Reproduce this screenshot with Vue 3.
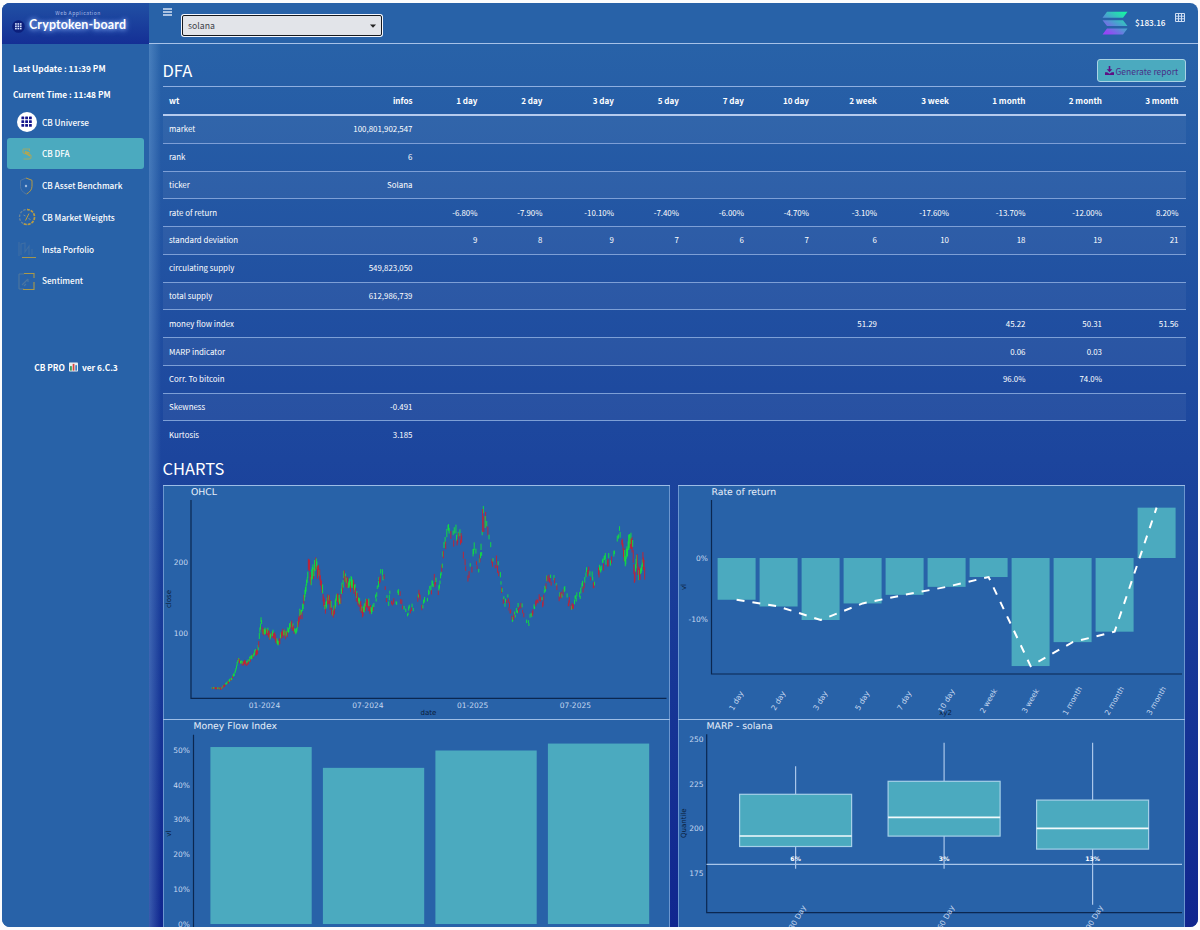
<script setup>
import { ref, computed } from "vue";

const token = ref("solana");
const activeItem = ref("dfa");

const menu = [
  { id: "universe", label: "CB Universe" },
  { id: "dfa", label: "CB DFA" },
  { id: "benchmark", label: "CB Asset Benchmark" },
  { id: "weights", label: "CB Market Weights" },
  { id: "portfolio", label: "Insta Porfolio" },
  { id: "sentiment", label: "Sentiment" },
];

const columns = [
  "wt", "infos", "1 day", "2 day", "3 day", "5 day", "7 day",
  "10 day", "2 week", "3 week", "1 month", "2 month", "3 month",
];
const periods = columns.slice(2);

const returns = [-6.8, -7.9, -10.1, -7.4, -6, -4.7, -3.1, -17.6, -13.7, -12, 8.2];
const deviations = [9, 8, 9, 7, 6, 7, 6, 10, 18, 19, 21];
const blank = (n) => Array(n).fill("");

const rows = [
  ["market", "100,801,902,547", ...blank(11)],
  ["rank", "6", ...blank(11)],
  ["ticker", "Solana", ...blank(11)],
  ["rate of return", "", ...returns.map((r) => r.toFixed(2) + "%")],
  ["standard deviation", "", ...deviations],
  ["circulating supply", "549,823,050", ...blank(11)],
  ["total supply", "612,986,739", ...blank(11)],
  ["money flow index", "", ...blank(6), "51.29", "", "45.22", "50.31", "51.56"],
  ["MARP indicator", "", ...blank(8), "0.06", "0.03", ""],
  ["Corr. To bitcoin", "", ...blank(8), "96.0%", "74.0%", ""],
  ["Skewness", "-0.491", ...blank(11)],
  ["Kurtosis", "3.185", ...blank(11)],
];

// OHCL: turning points of the price line, in chart coordinates
const path = [
  [212, 688], [221, 688.5], [226, 684], [232, 678], [235, 673], [238, 660], [242, 663],
  [247, 663], [252, 657], [255, 652], [258, 651], [261, 621], [263, 632], [267, 630],
  [270, 637], [273, 633], [278, 645], [282, 633], [286, 635], [291, 623], [296, 633],
  [300, 612], [302, 615], [304, 598], [307, 583], [308.5, 562], [311, 580], [313, 573],
  [316, 564], [321, 580], [325, 610], [328, 597], [333, 613], [337, 598], [340, 602],
  [344, 576], [348, 585], [353, 583], [357, 598], [363, 612], [367, 600], [371, 611],
  [376, 597], [380, 577], [384, 576], [388, 608], [390, 595], [395, 605], [399, 592],
  [403, 608], [407, 613], [410, 607], [413, 610], [419, 595], [422, 605], [428, 597],
  [434, 580], [439, 590], [443, 557], [448, 530], [450, 524], [453, 538], [458, 535],
  [463, 547], [467, 577], [472, 565], [475, 547], [478, 573], [481.6, 548], [483, 517],
  [486, 522], [489, 540], [492, 560], [497, 563], [501, 583], [504, 603], [507, 597],
  [512, 618], [516, 612], [520, 603], [524, 615], [527.6, 627], [532, 612], [537, 597],
  [543, 602], [547, 578], [553, 580], [559, 595], [565, 593], [571, 608], [577, 597],
  [582, 590], [587, 570], [594, 583], [600, 568], [607, 560], [614, 558], [618, 537],
  [620.6, 529], [625, 562], [630, 540], [632.6, 547], [634.5, 577], [637, 560],
  [639, 575], [643, 560], [645, 573],
];

const priceAt = (x) => {
  const i = Math.max(1, path.findIndex((p) => p[0] >= x));
  const [x0, y0] = path[i - 1];
  const [x1, y1] = path[i];
  return y0 + ((y1 - y0) * (x - x0)) / (x1 - x0);
};

const candles = computed(() => {
  let seed = 11;
  const rnd = () => {
    seed = (seed * 16807) % 2147483647;
    return seed / 2147483647;
  };
  const out = [];
  for (let x = 212; x < 645; x += 0.57) {
    const y = priceAt(x);
    const slope = priceAt(Math.min(x + 0.57, 645)) - y;
    const level = (700 - y) / 130;
    const sparse = x > 373 && x < 623;
    const r1 = rnd();
    const r2 = rnd();
    const r3 = rnd();
    if (sparse && r3 < 0.35) continue;
    const half = 0.5 + level * (sparse ? 3.2 : 6) * (0.35 + r1 * 0.65);
    const mid = y + (r2 - 0.5) * level * (sparse ? 12 : 8);
    const up = r1 + r2 < (slope < 0 ? 1.3 : 0.75);
    out.push({ x, y1: mid - half, y2: mid + half, up });
  }
  // the spike of the january 2025 top
  out.push({ x: 482.6, y1: 509, y2: 532, up: false });
  out.push({ x: 483.8, y1: 516, y2: 532, up: false });
  out.push({ x: 485.2, y1: 516, y2: 528, up: true });
  return out;
});

const priceTicks = [{ y: 562, label: "200" }, { y: 633.5, label: "100" }];
const dateTicks = [
  { x: 264.5, label: "01-2024" },
  { x: 367.8, label: "07-2024" },
  { x: 472.6, label: "01-2025" },
  { x: 575.3, label: "07-2025" },
];

// Rate of return
const rorBars = returns.map((r, i) => {
  const h = Math.abs(r) * 6.14;
  const cx = 737.1 + i * 42;
  return { cx, y: r < 0 ? 558 : 558 - h, h, end: 558 - r * 6.14, label: periods[i] };
});
const rorLine = rorBars.map((b) => `${b.cx},${b.end}`).join(" ");

// Money flow index
const mfiBars = [51, 45, 50, 52].map((v, i) => ({ x: 210.4 + i * 112.5, h: v * 3.47 }));
const mfiTicks = [0, 10, 20, 30, 40, 50].map((v) => ({ y: 924.3 - v * 3.475, label: v + "%" }));

// MARP
const boxes = [
  { cx: 796.1, top: 766.5, q3: 794.6, med: 836.3, q1: 846.8, low: 869, pct: "6%", label: "30 Day" },
  { cx: 944.6, top: 743, q3: 781.6, med: 817.7, q1: 836.4, low: 869, pct: "3%", label: "60 Day" },
  { cx: 1093.1, top: 743, q3: 800.4, med: 828.7, q1: 849.4, low: 905, pct: "13%", label: "90 Day" },
];
const marpTicks = [
  { y: 740, label: "250" },
  { y: 784.7, label: "225" },
  { y: 829, label: "200" },
  { y: 873.7, label: "175" },
];
</script>

<template>
  <div class="window">
    <aside class="sidebar">
      <div class="brand">
        <svg class="brand-icon" viewBox="0 0 14 14">
          <circle cx="7" cy="7" r="6.8" fill="#0c1f7c" />
          <g fill="#dbe6ff">
            <template v-for="r in 3" :key="r">
              <rect v-for="c in 3" :key="c" :x="0.7 + c * 2.6" :y="0.9 + r * 2.5" width="1.8" height="1.7" />
            </template>
          </g>
        </svg>
        <div class="brand-text">
          <span class="brand-sub">Web Application</span>
          <span class="brand-name">Cryptoken-board</span>
        </div>
      </div>

      <div class="times">
        <p>Last Update : 11:39 PM</p>
        <p>Current Time : 11:48 PM</p>
      </div>

      <nav class="menu">
        <a
          v-for="item in menu"
          :key="item.id"
          class="menu-item"
          :class="{ active: activeItem === item.id }"
          @click="activeItem = item.id"
        >
          <svg class="menu-icon" viewBox="0 0 20 20" fill="none">
            <template v-if="item.id === 'universe'">
              <circle cx="10" cy="10" r="10" fill="#fff" />
              <g fill="#15158c">
                <template v-for="r in 3" :key="r">
                  <rect v-for="c in 3" :key="c" :x="0.6 + c * 3.8" :y="0.6 + r * 3.8" width="2.8" height="2.8" rx="0.5" />
                </template>
              </g>
            </template>
            <template v-else-if="item.id === 'dfa'">
              <path d="M6 5h6.500v2M6 5.200v3l1.500 1.600h4.500L14 11.500V14l-1.500 1H6.500" stroke="#9ba76c" stroke-width="1.100" />
              <path d="M8 7.500l4.500 1.500M8 8.800l5 3.200" stroke="#c9a63c" stroke-width="1.200" />
            </template>
            <template v-else-if="item.id === 'benchmark'">
              <path d="M9 2L3.500 4.500v6c0 3 2 5.500 5.500 7.500" stroke="#5278a5" stroke-width="0.9" />
              <path d="M9 2l6 2.300v6c0 3.500-2.500 6-5.500 7.700" stroke="#b59a45" />
              <path d="M9 8.500l1.300 1.500L9 11.500 7.700 10z" fill="#b9cce6" />
            </template>
            <template v-else-if="item.id === 'weights'">
              <circle cx="10" cy="10" r="7.500" stroke="#6d8595" stroke-width="1.300" stroke-dasharray="2.600 1.300" />
              <path d="M10 2.500a7.500 7.500 0 1 1-4 13.800" stroke="#b89c40" stroke-width="1.600" stroke-dasharray="2.800 1.200" />
              <path d="M12 6.500l-3.500 7" stroke="#b89c40" />
              <path d="M6.500 8l2 1M11.500 11.500l2 1" stroke="#7c8e90" />
            </template>
            <template v-else-if="item.id === 'portfolio'">
              <path d="M2 3v14M4 16V5l4-1v9l4-6v9M15 16v-6" stroke="#3e6ea4" stroke-width="1.100" />
              <path d="M5 18.500h14" stroke="#a3954e" />
            </template>
            <template v-else>
              <path d="M2 3v15h5M2 3h5" stroke="#557a9b" stroke-width="0.900" />
              <path d="M7 2.500h10V7M17 11v7.500H6" stroke="#aa9848" stroke-width="1.100" />
              <path d="M5 14l6-6M7 15l2-2M11 8v3" stroke="#4975a2" stroke-width="1.200" />
            </template>
          </svg>
          <span>{{ item.label }}</span>
        </a>
      </nav>

      <div class="version">
        <span>CB PRO</span>
        <svg viewBox="0 0 10 10" class="version-icon">
          <rect width="10" height="10" rx="0.8" fill="#e9edf0" />
          <rect x="1.200" y="4" width="1.900" height="5" fill="#2e9b50" />
          <rect x="4.100" y="1.500" width="1.900" height="7.500" fill="#d8433c" />
          <rect x="7" y="3" width="1.900" height="6" fill="#3b82c4" />
        </svg>
        <span>ver 6.C.3</span>
      </div>
    </aside>

    <div class="body">
      <header class="topbar">
        <svg class="burger" viewBox="0 0 9 8">
          <path d="M0 1h9M0 4h9M0 7h9" stroke="#d5e2f4" stroke-width="1.300" />
        </svg>
        <div class="picker">
          <span>{{ token }}</span>
          <svg viewBox="0 0 6 4"><path d="M0 .5h6L3 3.700z" fill="#222" /></svg>
        </div>
        <div class="quote">
          <svg class="solana" viewBox="0 0 26 24">
            <defs>
              <linearGradient id="sol" x1="22" y1="0" x2="6" y2="24" gradientUnits="userSpaceOnUse">
                <stop offset="0.050" stop-color="#19f0a5" />
                <stop offset="0.500" stop-color="#4a9fd0" />
                <stop offset="0.950" stop-color="#9646f5" />
              </linearGradient>
            </defs>
            <path fill="url(#sol)" d="M5 .8h20.500L21 6.700H.5zM.5 9.200H21l4.500 5.900H5zM5 17.500h20.500L21 23.400H.5z" />
          </svg>
          <span class="price">$183.16</span>
          <svg class="grid-icon" viewBox="0 0 10 9">
            <path d="M.5.5h9v8h-9zM.5 3.200h9M.5 5.800h9M3.500.5v8M6.500.5v8" fill="none" stroke="#cfdef3" />
          </svg>
        </div>
      </header>

      <main class="main">
        <div class="title-row">
          <h1>DFA</h1>
          <button class="report">
            <svg viewBox="0 0 9 9">
              <path fill="#5f0f84" d="M3.700 0h1.600v3.200h2L4.500 6.200 1.700 3.200h2zM0 6.200h2.200l2.300 1.500 2.300-1.500H9V9H0z" />
            </svg>
            <span>Generate report</span>
          </button>
        </div>

        <table class="table">
          <thead>
            <tr>
              <th v-for="col in columns" :key="col">{{ col }}</th>
            </tr>
          </thead>
          <tbody>
            <tr v-for="row in rows" :key="row[0]">
              <td v-for="(cell, i) in row" :key="i">{{ cell }}</td>
            </tr>
          </tbody>
        </table>

        <h2>CHARTS</h2>

        <div class="charts">
          <svg class="chart" viewBox="163 486 507 233.5">
            <text class="chart-title" x="191" y="494.800">OHCL</text>
            <path class="axis" d="M191 500V698.300H666.500" />
            <text v-for="t in priceTicks" :key="t.label" class="tick end" x="188" :y="t.y + 2.700">{{ t.label }}</text>
            <text v-for="t in dateTicks" :key="t.label" class="tick mid" :x="t.x" y="708">{{ t.label }}</text>
            <line
              v-for="c in candles"
              :key="c.x"
              :class="c.up ? 'up' : 'down'"
              :x1="c.x"
              :x2="c.x"
              :y1="c.y1"
              :y2="c.y2"
            />
            <text class="axis-name" transform="translate(170.500 599) rotate(-90)">close</text>
            <text class="axis-name" x="428.500" y="714.500">date</text>
          </svg>

          <svg class="chart" viewBox="678.5 486 507 233.5">
            <text class="chart-title" x="712" y="494.800">Rate of return</text>
            <rect v-for="b in rorBars" :key="b.label" class="bar" :x="b.cx - 19" :y="b.y" width="38" :height="b.h" />
            <polyline class="trend" :points="rorLine" />
            <path class="axis" d="M712 500V674H1182.500" />
            <text class="tick end" x="708.500" y="560.800">0%</text>
            <text class="tick end" x="708.500" y="622.300">-10%</text>
            <text class="axis-name" x="946" y="715">xy2</text>
            <text
              v-for="b in rorBars"
              :key="b.label"
              class="tick mid"
              :transform="`translate(${b.cx + 2} 702) rotate(-60)`"
            >{{ b.label }}</text>
            <text class="axis-name" transform="translate(686 587) rotate(-90)">vl</text>
          </svg>

          <svg class="chart" viewBox="163 720.3 507 233.5">
            <text class="chart-title" x="193.500" y="729.300">Money Flow Index</text>
            <rect v-for="b in mfiBars" :key="b.x" class="bar" :x="b.x" :y="924.3 - b.h" width="101.300" :height="b.h" />
            <path class="axis" d="M193.500 735V933H666.500" />
            <text v-for="t in mfiTicks" :key="t.label" class="tick end" x="190" :y="t.y + 2.700">{{ t.label }}</text>
            <text class="axis-name" transform="translate(170.500 834) rotate(-90)">vl</text>
          </svg>

          <svg class="chart" viewBox="678.5 720.3 507 233.5">
            <text class="chart-title" x="707" y="729.300">MARP - solana</text>
            <path class="axis" d="M707.200 734.500V913H1182.500" />
            <g v-for="b in boxes" :key="b.label">
              <path class="whisker" :d="`M${b.cx} ${b.top}V${b.q3}M${b.cx} ${b.q1}V${b.low}`" />
              <rect class="box" :x="b.cx - 56" :y="b.q3" width="112" :height="b.q1 - b.q3" />
              <path class="median" :d="`M${b.cx - 56} ${b.med}h112`" />
              <text class="pct" :x="b.cx" y="861">{{ b.pct }}</text>
              <text class="tick mid" :transform="`translate(${b.cx + 4} 919) rotate(-60)`">{{ b.label }}</text>
            </g>
            <path class="whisker" d="M707 864.700H1182.500" />
            <text v-for="t in marpTicks" :key="t.label" class="tick end" x="704" :y="t.y + 2.700">{{ t.label }}</text>
            <text class="axis-name" transform="translate(686.500 823.500) rotate(-90)">Quantile</text>
          </svg>
        </div>
      </main>
    </div>
  </div>
</template>

<style>
body {
  background: #fcfcfd;
}
</style>

<style scoped>
* {
  margin: 0;
  padding: 0;
  box-sizing: border-box;
}

.window {
  display: flex;
  width: 1196px;
  height: 924px;
  margin: 3px 2px;
  border-radius: 8px;
  overflow: hidden;
  background: #2862a8;
  color: #fff;
  font-family: "Noto Sans CJK SC", "Noto Sans", sans-serif;
  font-size: 8.2px;
  font-weight: 500;
}

/* sidebar */
.sidebar {
  width: 147px;
  flex-shrink: 0;
  background: #2862a8;
}

.brand {
  display: flex;
  align-items: flex-end;
  height: 41px;
  padding: 0 0 11px 10px;
  background: linear-gradient(#2150a4, #142f95);
  gap: 4px;
}

.brand-icon {
  width: 13px;
  height: 13px;
}

.brand-text {
  display: flex;
  flex-direction: column;
  width: 98px;
}

.brand-sub {
  font-size: 5px;
  font-weight: 400;
  line-height: 8px;
  letter-spacing: 0.500px;
  text-align: center;
  color: #a9bce8;
}

.brand-name {
  font-family: "Lato", sans-serif;
  font-size: 12.400px;
  font-weight: 700;
  letter-spacing: 0.180px;
  line-height: 16px;
  white-space: nowrap;
  text-shadow: 0 0 4px #8fb2f5, 0 1px 6px #6f9cf0;
}

.times {
  padding: 10.500px 11px 0;
  font-size: 8.350px;
}

.times p {
  height: 26px;
  line-height: 26px;
  font-weight: 700;
}

.menu {
  padding: 0 5px;
}

.menu-item {
  display: flex;
  align-items: center;
  height: 31px;
  margin-bottom: 0.800px;
  padding-left: 10px;
  gap: 5px;
  border-radius: 3px;
}

.menu-item.active {
  background: #4baabf;
}

.menu-item span {
  position: relative;
  top: -0.500px;
}

.menu-icon {
  width: 20px;
  height: 20px;
}

.version {
  display: flex;
  align-items: center;
  justify-content: center;
  gap: 4px;
  margin-top: 65px;
  padding-left: 1px;
  font-size: 8.350px;
  font-weight: 700;
}

.version-icon {
  width: 9px;
  height: 10px;
}

/* topbar */
.body {
  display: flex;
  flex-direction: column;
  flex: 1;
  min-width: 0;
}

.topbar {
  display: flex;
  align-items: flex-start;
  flex-shrink: 0;
  height: 41px;
  padding: 0 13.500px 0 14px;
  border-bottom: 1px solid #a7c2e8;
}

.burger {
  width: 9px;
  height: 8px;
  margin-top: 5px;
}

.picker {
  display: flex;
  align-items: center;
  justify-content: space-between;
  width: 200px;
  height: 21px;
  margin: 12px 0 0 10px;
  padding: 0 5px 0 5px;
  background: #e2e4e9;
  border: 1.500px solid #15181d;
  border-radius: 2px;
  box-shadow: 0 0 0 1px #f5f8ff;
  color: #3c4048;
  font-size: 8.700px;
  font-weight: 400;
}

.picker svg {
  width: 6px;
  height: 4px;
}

.quote {
  display: flex;
  align-items: flex-start;
  margin-left: auto;
}

.solana {
  width: 26px;
  height: 24px;
  margin-top: 8px;
}

.price {
  margin: 13px 9px 0 7.500px;
  line-height: 13px;
}

.grid-icon {
  width: 10px;
  height: 9px;
  margin-top: 10px;
}

/* content */
.main {
  flex: 1;
  min-height: 0;
  padding: 15px 12.500px 0 13.500px;
  overflow: hidden;
  background:
    linear-gradient(90deg, rgba(120, 170, 220, 0.4), rgba(120, 170, 220, 0) 12px),
    linear-gradient(#2862a8, #1c459d 47%, #10268f);
}

.title-row {
  display: flex;
  align-items: center;
  justify-content: space-between;
  height: 23px;
}

h1,
h2 {
  font-size: 16.500px;
  font-weight: 400;
  line-height: 23px;
}

h1 {
  margin-top: -1px;
}

.report {
  display: flex;
  align-items: center;
  gap: 2px;
  height: 23px;
  width: 89px;
  padding: 0 0 0 7px;
  border: 1px solid #a9d3e4;
  border-radius: 3px;
  background: #4baabf;
  color: #493087;
  font: inherit;
  font-size: 8.500px;
  font-weight: 400;
  white-space: nowrap;
}

.report svg {
  width: 9px;
  height: 9px;
  flex-shrink: 0;
}

.table {
  display: block;
  margin-top: 4px;
  border-top: 1px solid #8fafe0;
}

.table thead,
.table tbody {
  display: block;
}

.table tr {
  display: grid;
  grid-template-columns: 160.500px 96px 65px 65px 71.500px 65px 65px 65px 68px 72px 76.500px 76.500px 76.500px;
  align-items: center;
  height: 27.780px;
  border-bottom: 1px solid #7d9fd6;
}

.table thead tr {
  height: 29px;
  border-bottom: 2px solid #b6cbee;
}

.table tbody tr:nth-child(odd) {
  background: rgba(255, 255, 255, 0.05);
}

.table tbody tr:last-child {
  border-bottom: none;
}

.table th,
.table td {
  padding: 0 6.500px;
  line-height: 12px;
  font-size: 7.900px;
  font-weight: 400;
  text-align: right;
}

.table th {
  font-size: 8.100px;
  font-weight: 700;
}

.table th:first-child,
.table td:first-child {
  text-align: left;
}

h2 {
  margin-top: 7.640px;
}

.charts {
  display: grid;
  grid-template-columns: 507px 507px;
  column-gap: 8.500px;
  margin-top: 5px;
}

.chart {
  display: block;
  width: 507px;
  height: 234.500px;
  background: #2862a8;
  border-top: 1px solid #9dbde6;
  box-shadow: inset 1px 0 #6b96cf, inset -1px 0 #6b96cf;
}

.chart text {
  font-family: "DejaVu Sans", sans-serif;
  font-weight: 400;
  text-rendering: geometricPrecision;
}

.chart-title {
  fill: #e6effa;
  font-size: 9.300px;
}

.tick {
  fill: #c6d8f0;
  font-size: 7.500px;
}

.end {
  text-anchor: end;
}

.mid {
  text-anchor: middle;
}

.axis-name {
  fill: #0a1c38;
  font-size: 7px;
  text-anchor: middle;
}

.axis {
  fill: none;
  stroke: #0b2750;
  stroke-width: 1.200;
}

.up,
.down {
  stroke: #10e63a;
  stroke-width: 0.900;
}

.down {
  stroke: #c82030;
}

.bar {
  fill: #4baabf;
}

.trend {
  fill: none;
  stroke: #fff;
  stroke-width: 2;
  stroke-dasharray: 8 8;
}

.whisker {
  stroke: #a9c6ea;
  stroke-width: 1.200;
}

.box {
  fill: #4baabf;
  stroke: #a5d0e8;
  stroke-width: 1.200;
}

.median {
  stroke: #f2fafc;
  stroke-width: 1.600;
}

.chart .pct {
  fill: #fff;
  font-size: 6.200px;
  font-weight: 700;
  text-anchor: middle;
}
</style>
